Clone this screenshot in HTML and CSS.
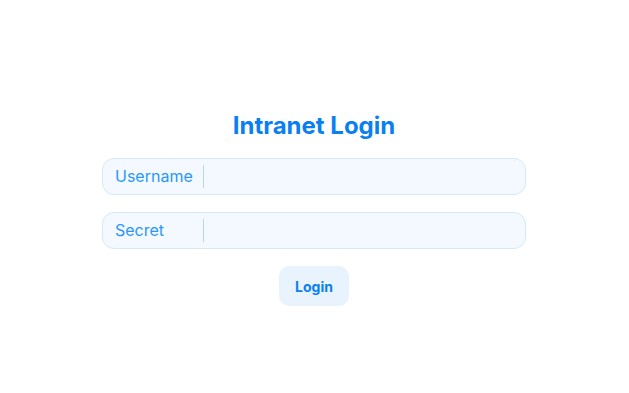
FILE: index.html
```html
<!DOCTYPE html>
<html>

<head>
    <meta name="viewport" content="width=device-width, initial-scale=1">
    <title>Intranet Login</title>
    <link rel="stylesheet" href="styles.css">
</head>

<body>
    <div class="container">
        <h2 class="title">Intranet Login</h2>
        <form class="login-form" method="POST" action="/login">
            <div class="field">
                <label for="username">Username</label>
                <input type="text" id="username" name="username">
            </div>
            <div class="field">
                <label for="secret">Secret</label>
                <input type="password" id="secret" name="secret">
            </div>
            <button type="submit" class="login-btn">Login</button>
        </form>
    </div>
</body>

</html>
```

FILE: styles.css
```css
body {
    font-family: Inter, "Noto Sans", Arial, sans-serif;
    margin: 0;
    padding: 0;
    background-color: #fff;
}

.container {
    width: 424px;
    margin: 0 auto;
    padding: 112px 1px 0 0;
}

.title {
    text-align: center;
    color: #0a80f0;
    font-size: 24px;
    font-weight: 700;
    margin: 0 0 18px 0;
    line-height: 28px;
}

.login-form {
    display: flex;
    flex-direction: column;
    align-items: center;
}

.field {
    display: flex;
    align-items: center;
    width: 100%;
    height: 37px;
    box-sizing: border-box;
    border: 1px solid #d4e8fb;
    border-radius: 12px;
    background-color: #f3f9fe;
    margin-bottom: 17px;
}

.field label {
    width: 101px;
    box-sizing: border-box;
    padding-left: 12px;
    font-size: 16px;
    color: #2b97f7;
    border-right: 1px solid #b5d7f5;
    line-height: 23px;
}

.field input {
    flex: 1;
    border: none;
    background: transparent;
    outline: none;
    height: 100%;
    padding: 0 10px;
    font-size: 16px;
    font-family: inherit;
}

.login-btn {
    width: 70px;
    height: 40px;
    border: none;
    border-radius: 10px;
    background-color: #e8f3fe;
    color: #0a80f0;
    font-family: inherit;
    font-size: 14px;
    font-weight: 700;
    cursor: pointer;
}
```
